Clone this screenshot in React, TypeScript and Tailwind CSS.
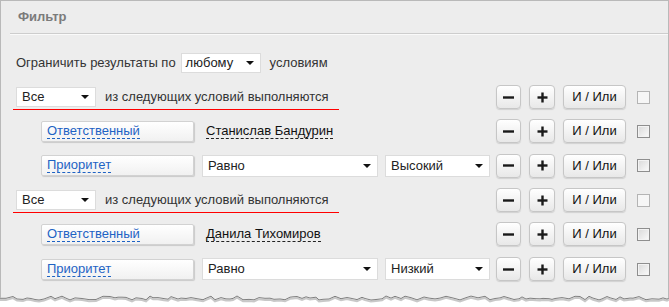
import React from "react";

const font = "font-['Liberation_Sans',Arial,sans-serif]";

function Arrow() {
  return (
    <svg width="8" height="4" viewBox="0 0 8 4" className="shrink-0">
      <path d="M0 0h8L4 4z" fill="#111" />
    </svg>
  );
}

function Select({
  value,
  className,
}: {
  value: string;
  className: string;
}) {
  return (
    <div
      className={`flex items-center justify-between border border-[#dcdcdc] bg-white pr-[6px] text-[13px] text-[#222] ${className}`}
    >
      <span>{value}</span>
      <Arrow />
    </div>
  );
}

function Btn({
  children,
  className,
}: {
  children: React.ReactNode;
  className: string;
}) {
  return (
    <div
      className={`flex h-[24px] items-center justify-center rounded-[4px] border border-[#c6c6c6] bg-linear-to-b from-white to-[#e8e8e8] shadow-[0_1px_1px_rgba(0,0,0,0.12)] ${className}`}
    >
      {children}
    </div>
  );
}

function Minus() {
  return (
    <svg width="11" height="11" viewBox="0 0 11 11">
      <rect x="0" y="4.3" width="11" height="2.4" fill="#1a1a1a" />
    </svg>
  );
}

function Plus() {
  return (
    <svg width="11" height="11" viewBox="0 0 11 11">
      <rect x="0.5" y="4.3" width="10" height="2.4" fill="#1a1a1a" />
      <rect x="4.3" y="0.5" width="2.4" height="10" fill="#1a1a1a" />
    </svg>
  );
}

function Check({ group }: { group?: boolean }) {
  if (group)
    return (
      <div className="ml-[11px] h-[13px] w-[13px] border border-[#b4b4b4] bg-[#f6f6f6]" />
    );
  return (
    <div className="ml-[11px] h-[13px] w-[13px] border border-[#8e8e8e] bg-linear-to-br from-[#d9d9d9] to-[#fbfbfb] shadow-[inset_0_0_0_1px_#f3f3f3]" />
  );
}

function Actions({ group }: { group?: boolean }) {
  return (
    <div className="ml-auto flex items-center">
      <Btn className="w-[25px]">
        <Minus />
      </Btn>
      <Btn className="ml-[8px] w-[26px]">
        <Plus />
      </Btn>
      <Btn className="ml-[8px] w-[63px] text-[13px] text-[#111]">И / Или</Btn>
      <Check group={group} />
    </div>
  );
}

function Field({ label }: { label: string }) {
  return (
    <div className="flex h-[21px] w-[153px] shrink-0 items-center rounded-[2px] border border-[#d2d2d2] bg-linear-to-b from-white to-[#f1f1f1] pl-[5px] shadow-[1px_1px_1px_rgba(0,0,0,0.15)]">
      <span className="border-b border-dashed border-[#1e63c4] text-[13px] leading-[14px] text-[#1e63c4]">
        {label}
      </span>
    </div>
  );
}

function GroupRow({ h }: { h: string }) {
  return (
    <div className={`flex items-center ${h}`}>
      <div className="ml-[12px] flex w-[326px] items-center border-b border-[#ff0000] pb-[2px] pl-[3px] pt-[3px]">
        <Select value="Все" className="h-[20px] w-[80px] pl-[5px]" />
        <span className="ml-[9px] text-[13px] text-[#333]">
          из следующих условий выполняются
        </span>
      </div>
      <Actions group />
    </div>
  );
}

function PersonRow({ name, h }: { name: string; h: string }) {
  return (
    <div className={`flex items-center pl-[40px] ${h}`}>
      <Field label="Ответственный" />
      <span className="ml-[12px] border-b border-dashed border-[#222] text-[13px] leading-[14px] text-[#111]">
        {name}
      </span>
      <Actions />
    </div>
  );
}

function PriorityRow({ level, h }: { level: string; h: string }) {
  return (
    <div className={`flex items-center pl-[40px] ${h}`}>
      <Field label="Приоритет" />
      <Select value="Равно" className="ml-[8px] h-[22px] w-[176px] pl-[5px]" />
      <Select value={level} className="ml-[7px] h-[22px] w-[105px] pl-[5px]" />
      <Actions />
    </div>
  );
}

function TornEdge() {
  const pts: string[] = [];
  let x = 0;
  let i = 0;
  while (x < 669) {
    const r = Math.abs(Math.sin(i * 91.7 + 3.1) * 1000) % 1;
    pts.push(`${x},${(1 + r * 4).toFixed(1)}`);
    const s = Math.abs(Math.sin(i * 17.3 + 1.7) * 1000) % 1;
    x += 3 + Math.round(s * 4);
    i++;
  }
  pts.push(`669,3`);
  const line = pts.join(" ");
  const shadow = pts
    .map((p) => {
      const [a, b] = p.split(",");
      return `${a},${(parseFloat(b) + 1.6).toFixed(1)}`;
    })
    .join(" ");
  return (
    <svg width="669" height="12" viewBox="0 0 669 12" className="block">
      <polyline points={shadow} fill="none" stroke="#9a9a9a" strokeWidth="2" opacity="0.55" />
      <polygon points={`0,0 ${line} 669,0`} fill="#ededed" />
      <polyline points={line} fill="none" stroke="#7f7f7f" strokeWidth="1" />
      <line x1="0.5" y1="0" x2="0.5" y2="3" stroke="#b9b9b9" />
      <line x1="668.5" y1="0" x2="668.5" y2="3" stroke="#b9b9b9" />
    </svg>
  );
}

export default function App() {
  return (
    <div className={`h-[307px] w-[669px] bg-white ${font}`}>
      <div className="h-[295px] w-[669px] border border-b-0 border-[#b9b9b9] bg-[#ededed]">
        <div className="ml-[9px] flex h-[33px] items-center border-b border-[#cdcdcd] pl-[8px] text-[13px] font-bold text-[#7b7b7b] shadow-[0_1px_0_#fafafa]">
          Фильтр
        </div>
        <div className="pr-[18px]">
          <div className="mt-[12px] flex h-[34px] items-center pl-[15px] text-[13px] text-[#333]">
            <span>Ограничить результаты по</span>
            <Select value="любому" className="ml-[5px] h-[20px] w-[80px] pl-[4px]" />
            <span className="ml-[9px]">условиям</span>
          </div>
          <GroupRow h="h-[34px]" />
          <PersonRow name="Станислав Бандурин" h="h-[34px]" />
          <PriorityRow level="Высокий" h="h-[35px]" />
          <GroupRow h="h-[34px]" />
          <PersonRow name="Данила Тихомиров" h="h-[34px]" />
          <PriorityRow level="Низкий" h="h-[36px]" />
        </div>
      </div>
      <TornEdge />
    </div>
  );
}
